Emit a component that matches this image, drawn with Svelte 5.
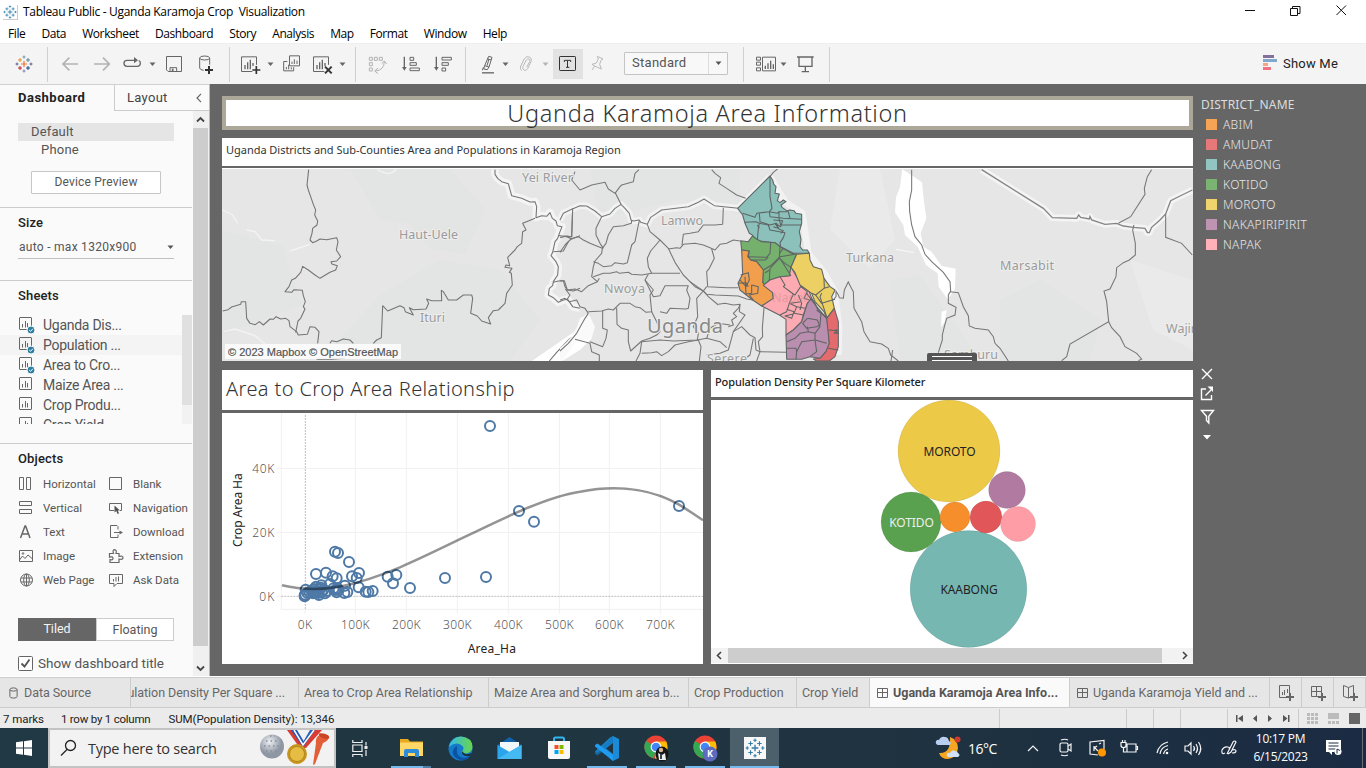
<script>
  const menus = [
    ['File', 8], ['Data', 16], ['Worksheet', 16], ['Dashboard', 16], ['Story', 16],
    ['Analysis', 16], ['Map', 16], ['Format', 16], ['Window', 16], ['Help', 16]
  ];
  const tools = [
    ['logo', 20, 14], ['sep', 1, 13], ['back', 20, 12], ['forward', 20, 12], ['redo', 22, 10],
    ['caret', 7, 5], ['save', 20, 8], ['database', 20, 12], ['sep', 1, 13], ['newsheet', 22, 10],
    ['caret', 7, 5], ['duplicate', 20, 8], ['clear', 22, 10], ['caret', 7, 5], ['sep', 1, 9],
    ['swap', 22, 11], ['ascending', 22, 11], ['descending', 22, 10], ['sep', 1, 11],
    ['highlight', 16, 14], ['caret', 7, 6], ['clip', 16, 9], ['caretoff', 7, 8],
    ['text', 30, 4], ['pin', 16, 7], ['combo', 104, 18], ['sep', 1, 15], ['cards', 22, 11],
    ['caret', 7, 3], ['present', 20, 9], ['sep', 1, 13]
  ];
  const sheets = [
    ['Uganda Dis...', true], ['Population ...', true], ['Area to Cro...', true],
    ['Maize Area ...', false], ['Crop Produ...', false], ['Crop Yield', false]
  ];
  const objects = [
    ['Horizontal', 'Blank'], ['Vertical', 'Navigation'], ['Text', 'Download'],
    ['Image', 'Extension'], ['Web Page', 'Ask Data']
  ];
  const legend = [
    ['ABIM', '#f5a455'], ['AMUDAT', '#e7787a'], ['KAABONG', '#91c5c1'], ['KOTIDO', '#7ab372'],
    ['MOROTO', '#f0d36c'], ['NAKAPIRIPIRIT', '#bf94b3'], ['NAPAK', '#ffb0b8']
  ];

  // Boundary lines of the base map, three units to a pixel, grouped by sheet origin.
  const west = [
    '266,14 261,60 265,75 272,95 280,118 287,135 284,150 293,168 291,180 278,190 276,205 270,225 278,233 290,228 300,222 320,224 350,218 354,230 349,255 362,275 350,288 333,290 336,297 352,302 347,315 330,322 300,340 285,330 265,315 248,304 242,322 226,340 215,345 207,365 195,380 215,382 222,374 247,376 250,392 256,410 250,425 255,432 242,460 234,468 227,503',
    '8,438 24,434 35,426 62,418 64,410 77,410 80,460 90,475 106,479 118,470 130,480 150,462 160,463 168,455 182,462 197,460 207,467 210,485 230,500 235,510 262,508 270,485 285,487 297,500 293,535',
    '330,535 335,527 350,530 370,522 390,525 400,535',
    '460,535 470,525 484,518 488,422 503,438 540,422 552,428 556,440 580,450 568,428 580,434 618,432 626,415 620,402 635,407 665,407 664,376 670,380 685,405 710,405 730,390 755,390 758,400 752,445 772,453 785,468 812,477 805,458 820,437 835,435 855,415 860,385 877,360 874,325 868,322 876,310 855,307 858,300 869,302 863,277 885,255 892,245 905,235 908,200 918,195 908,175 925,168 945,160',
    '1058,135 1055,215 1018,212 1040,215 1055,222 1080,212',
    '1045,230 1030,258 1000,260',
    '1000,352 1015,348 1030,347 1035,365 1042,375 1060,378 1080,370',
    '1036,372 1050,390 1040,405',
    '988,588 1010,562 1050,520 1080,500',
    '290,583 335,583 375,580'
  ];
  const westHalo = [
    '825,14 825,28 833,40 845,50 865,56 875,92 905,100 930,111 945,110 950,125 948,158 965,152 980,154 990,143 997,160 1008,168 1012,182 1026,185 1018,205 1013,220 1005,230 998,262 993,272 1008,290 1015,305 1013,330 1000,350 998,362 988,370 985,390 1000,398 1015,412 1030,405 1043,403 1058,425 1080,430'
  ];
  const center = [
    '45,20 35,45 60,75 95,60 135,52 145,72 165,85 180,65 185,60 220,50 225,25 237,14',
    '165,82 183,118', '455,14 465,25 482,38 477,55 500,70 530,90 557,100', '630,35 640,22 655,10',
    '38,130 35,215 20,213 0,218', '125,155 108,190 108,210 120,235 130,250',
    '0,262 15,240 30,225 38,220 55,215 70,225 90,235 110,243 127,250 125,265 105,288 100,305 95,335 112,350 118,340',
    '100,290 115,295 130,305 155,302 165,293 190,297 202,293 215,240 225,230 235,180 238,168',
    '215,165 214,175 190,182 160,185 145,210 138,235 127,250',
    '262,178 270,200 300,225 325,250 345,292 370,330 390,350 405,365 430,378 445,395 475,420',
    '300,225 285,243 272,258 262,280 265,305 275,325 360,325',
    '100,335 130,325 150,325 170,320 178,325 205,322 215,328 245,330 275,325',
    '265,328 255,345 280,395 300,392 315,362 385,362',
    '325,252 350,248 360,250 370,238 405,235 430,240 450,248 465,255 480,238 500,235 520,225 540,228',
    '490,128 488,178 465,180 430,180 415,200 390,205 370,208 366,240',
    '455,252 463,280 448,310 440,320 443,365 500,368 535,368',
    '0,347 13,347 22,375 45,372 65,380 85,362 112,350',
    '0,405 15,400 28,410 50,405 60,425 75,430 85,445',
    '85,445 75,460 50,505 25,535 0,558', '45,523 90,535 95,560 118,570 118,588',
    '85,440 125,438 145,432 160,435 180,415 210,415 225,425 240,428 258,442 275,440 270,390 280,375 255,345',
    '128,438 128,490 142,495 138,520 128,545 90,530',
    '170,428 171,478 185,490 205,495 205,530 212,558 245,528 270,520 290,510 300,500 290,470 275,440',
    '385,362 380,375 390,400 385,430 378,432 330,430 320,445 300,440',
    '390,350 430,378 410,400 413,455 400,485 415,505 412,525 340,528 300,525 245,530 240,565 228,588',
    '245,565 275,563 290,560 305,572 325,560 345,540 385,530 415,525 423,545 418,588',
    '440,365 430,378 440,388 465,390 535,393 560,402 578,405',
    '475,418 495,415 520,420 540,418 535,430 520,445 530,455 515,465 520,480 505,485',
    '540,418 538,440 555,450 520,500 512,530 505,555 480,565 440,570',
    '520,500 545,485 570,510 585,518 588,555 600,560 678,562',
    '612,428 607,490 608,515 595,530 600,560 590,588',
    '412,525 440,520 480,530 500,548', '440,520 450,490 475,475 510,480',
    '580,520 570,570 545,588',
    '820,405 828,395 828,378 835,390 838,398 850,400 853,375 865,350 868,358 880,380 882,430 905,470 912,500 930,530 965,537 985,550 992,570 1015,588'
  ];
  const centerHalo = ['0,165 10,145 30,135 60,122 80,123 105,138 125,155 150,147 165,130 183,118 195,130 208,145 213,165 220,168 238,165 242,172 262,178 272,157 305,135 385,125 415,112 432,102 463,122 535,130 630,35'];
  const east = [
    '155,14 155,75 148,110 149,140 155,180 165,215 185,240 195,268 215,290 250,322 270,350 272,378 265,390 265,415 288,427 285,450 260,460 253,485 247,510 247,525 235,563',
    '270,380 295,383 310,425 325,452 328,483 345,490 385,495 400,515 405,535 420,550 445,588',
    '775,175 812,155 855,88 853,70 862,35 875,14',
    '822,180 818,195 826,235 826,270 808,285 790,293 770,308 768,335 750,372 732,378 740,410 746,470 630,537 620,575 605,587',
    '746,470 755,488 780,515 795,545 830,565 845,582 835,587',
    '917,147 917,217 965,235 997,270', '98,555 93,588'
  ];
  const eastHalo = ['365,14 550,130 577,158 650,160 656,150 662,157 688,162 690,155 695,165 735,178 770,175 790,183 820,187 855,190 862,203 868,203 875,187 900,165 917,147 932,107 960,93 997,75'];
  const districts = [
    ['#8bc0bb', '150,18 158,30 161,42 168,50 165,70 178,72 172,92 180,98 190,90 198,95 183,105 186,112 200,122 210,120 222,122 228,130 245,133 245,160 238,185 243,208 240,230 248,240 262,240 268,250 220,250 185,232 165,218 110,212 97,195 88,190 75,160 68,135 53,115'],
    ['#75b06c', '62,212 85,215 97,198 110,207 125,215 165,218 182,232 215,250 230,253 213,292 208,318 180,320 150,330 130,346 128,330 130,300 110,275 92,270 85,260 88,243 65,240'],
    ['#f19e4d', '65,240 87,243 83,260 92,270 110,275 130,300 128,338 158,368 160,385 125,408 98,390 60,360 54,340 68,312'],
    ['#feaab2', '130,346 150,330 180,320 208,318 213,290 235,330 245,350 265,358 275,385 262,400 250,435 245,455 220,480 198,495 198,448 178,435 125,408 160,385 158,368'],
    ['#ecd063', '230,253 268,250 270,270 280,290 305,298 312,325 330,350 345,360 335,380 343,415 320,445 312,425 285,395 275,370 240,345 225,308 213,292'],
    ['#b98eae', '275,385 285,400 293,418 320,445 325,470 328,520 318,545 300,565 270,560 245,568 200,568 198,495 220,480 245,455 262,400'],
    ['#e46b6d', '343,415 355,455 355,530 345,560 328,573 290,573 280,567 300,565 318,545 328,520 320,445']
  ];
  const wards = [
    '150,18 150,80 156,115 148,125 110,130 105,142 68,130', '75,157 108,155 118,160 115,175 112,210',
    '118,160 145,165 150,180 195,188 190,203 180,218 182,232', '148,125 150,140 190,145 245,148',
    '148,125 172,130 177,125 177,145 182,165 245,165', '160,150 188,152 182,170 165,160 178,178 190,182 182,190',
    '118,130 120,155 150,165 170,160 175,175 160,170', '112,165 118,175', '177,125 205,125 210,145',
    '85,260 140,262 150,250 152,218', '92,270 135,270 145,262', '180,232 178,265 150,295 148,330', '130,300 155,285 180,260 225,253',
    '180,265 213,318', '178,265 195,280 213,292', '135,308 150,300', '178,250 190,235',
    '62,315 85,308 88,330 78,350 60,330', '75,320 78,372 95,370 95,345 115,350 113,370 88,375 100,390', '54,340 78,338 85,350',
    '180,320 195,345 190,350 220,372 225,375 242,350 262,365 252,385 268,390', '220,372 208,400 230,410 255,415',
    '208,400 200,425 190,430 180,435', '230,410 222,430 235,432 250,435', '200,418 222,425 215,445 195,438 220,432',
    '235,375 245,400 240,420', '212,400 242,395',
    '275,370 287,375 312,355 328,350', '287,375 305,400 345,388', '260,370 290,410 320,445', '305,370 300,380 320,440', '312,325 313,355',
    '200,515 225,505 240,490 265,485 285,490 300,470 292,450 262,445', '262,445 248,460 260,475 290,470 300,465 303,430',
    '200,535 228,535 230,545 245,515 285,510 285,490', '285,510 290,545 270,560', '285,510 320,520', '230,545 228,568', '265,485 262,470', '303,430 290,420',
    '325,480 355,482', '343,480 355,490 343,490 350,478', '325,535 355,540'
  ];

  // Marks of the area/crop scatter plot.
  const marks = [
    [810, 183], [897, 438], [942, 470], [1377, 423], [798, 636], [675, 639], [570, 669], [529, 630], [503, 635],
    [519, 655], [458, 678], [445, 681], [437, 680], [416, 667], [417, 624], [410, 639], [396, 634], [387, 591],
    [345, 560], [354, 564], [288, 627], [318, 623], [338, 634], [350, 640], [375, 662], [382, 681], [373, 684],
    [350, 682], [346, 675], [352, 670], [341, 670], [330, 657], [315, 685], [297, 690], [304, 661], [288, 665],
    [290, 677], [298, 672], [310, 675], [279, 685], [275, 677], [284, 683], [268, 681], [257, 674], [256, 689],
    [254, 694], [262, 684], [305, 680], [320, 678], [295, 684], [303, 668], [356, 675], [254, 691], [282, 672]
  ];
  const xTicks = [[255, '0K'], [406, '100K'], [559, '200K'], [712, '300K'], [865, '400K'], [1018, '500K'], [1168, '600K'], [1321, '700K']];
  const bubbles = [
    [949, 451, 51, '#edc948', 'MOROTO', '#222'], [968.5, 589, 58.4, '#76b7b2', 'KAABONG', '#222'],
    [911, 522, 30, '#59a14f', 'KOTIDO', '#eee'], [1007, 490, 18.4, '#b07aa1', '', ''],
    [955, 517, 15, '#f68e2b', '', ''], [986, 517, 16, '#e15759', '', ''], [1018, 524, 17.5, '#ff9da7', '', '']
  ];
  const tabs = [
    ['Area to Crop Area Relationship', 190, ''], ['Maize Area and Sorghum area b...', 200, ''], ['Crop Production', 108, ''],
    ['Crop Yield', 73, ''], ['Uganda Karamoja Area Info...', 200, 'active'], ['Uganda Karamoja Yield and ...', 200, 'dash']
  ];
</script>

{#snippet caret(color)}
  <svg width="7" height="5" viewBox="0 0 7 5"><path d="M.5 .5h6L3.500 4z" fill={color} /></svg>
{/snippet}

{#snippet lines(list)}
  {#each list as p}<polyline points={p} />{/each}
{/snippet}

{#snippet tableau(size, mono)}
  <svg width={size} height={size} viewBox="0 0 18 18" fill="none" stroke-width="1">
    <path d="M9 6v6M6 9h6" stroke={mono ?? '#e8762c'} stroke-width="1.2" />
    <path d="M5 3v4M3 5h4" stroke={mono ?? '#eb912c'} /><path d="M13 3v4M11 5h4" stroke={mono ?? '#59879b'} />
    <path d="M5 11v4M3 13h4" stroke={mono ?? '#c72035'} /><path d="M13 11v4M11 13h4" stroke={mono ?? '#1f457e'} />
    <path d="M9 .5v3M7.500 2h3" stroke={mono ?? '#7199a6'} /><path d="M9 14.500v3M7.500 16h3" stroke={mono ?? '#7b86b2'} />
    <path d="M2 7.500v3M.5 9h3M16 7.500v3M14.500 9h3" stroke={mono ?? '#5b6591'} />
  </svg>
{/snippet}

{#snippet tool(name)}
  {#if name === 'logo'}{@render tableau(18)}
  {:else if name === 'caret'}{@render caret('#666')}
  {:else if name === 'caretoff'}{@render caret('#b5b5b5')}
  {:else if name === 'back'}
    <svg viewBox="180 162 60 60" width="20" height="20"><path d="M234 192H190M208 173l-19 19 19 19" stroke="#b3b3b3" stroke-width="5" fill="none" /></svg>
  {:else if name === 'forward'}
    <svg viewBox="276 162 60 60" width="20" height="20"><path d="M282 192h44M309 173l19 19-19 19" stroke="#b3b3b3" stroke-width="5" fill="none" /></svg>
  {:else if name === 'redo'}
    <svg viewBox="366 159 66 66" width="22" height="22"><path d="M409 181h-28q-9 0-9 9t9 9h30q10 0 10-9 0-7-5-8" stroke="#666" stroke-width="4" fill="none" /><path d="M402 171l12 10-12 9z" fill="#666" /></svg>
  {:else if name === 'save'}
    <svg viewBox="492 162 60 60" width="20" height="20" fill="none" stroke="#666" stroke-width="3"><path d="M499.500 169.500h45v45h-40l-5-5zM510 214v-11h20v11" /><path d="M518 206v8" stroke-width="5" /></svg>
  {:else if name === 'database'}
    <svg viewBox="588 162 60 60" width="20" height="20" fill="none" stroke="#666" stroke-width="3"><ellipse cx="614" cy="174" rx="15" ry="6" /><path d="M599 174v30q1 6 12 7M629 174v20" /><path d="M627 198v24M615 210h24" stroke="#333" stroke-width="6" /></svg>
  {:else if name === 'newsheet' || name === 'clear'}
    <svg viewBox="720 159 66 66" width="22" height="22" fill="none" stroke="#666" stroke-width="3"><path d="M757 214.500h-32.500v-44h45v24" /><path d="M735 195v13M743 187v21M751 179v29M759 189v9" stroke-width="4" />{#if name === 'newsheet'}<path d="M769 198v24M757 210h24" stroke="#333" stroke-width="5" />{:else}<path d="M759 200l20 20M779 200l-20 20" stroke="#333" stroke-width="6" />{/if}</svg>
  {:else if name === 'duplicate'}
    <svg viewBox="846 162 60 60" width="20" height="20" fill="none" stroke="#666" stroke-width="3"><path d="M868.500 167.500h30v30h-30zM862 184.500h-11v28h30v-11M876 185v7M883 178v14M891 182v10M859 201v7M866 194v14M874 202v6" /></svg>
  {:else if name === 'swap'}
    <svg viewBox="1101 159 66 66" width="22" height="22" fill="none" stroke="#b3b3b3" stroke-width="3"><path d="M1108 172h9v9h-9zM1123 172h9v9h-9zM1138 172h9v9h-9zM1108 188h9v9h-9zM1108 204h9v9h-9zM1126 213q26-2 27-28M1145 191l8-8 7 9M1134 204l-10 9 10 8" /></svg>
  {:else if name === 'ascending' || name === 'descending'}
    <svg viewBox="1197 159 66 66" width="22" height="22" fill="none" stroke="#666" stroke-width="3"><path d="M1210 170v36" stroke-width="4" /><path d="M1203 201h14l-7 11z" fill="#666" stroke="none" />{#if name === 'ascending'}<path d="M1227 172h11v9h-11zM1227 188h19v8h-19zM1227 204h28v8h-28z" />{:else}<path d="M1227 172h28v8h-28zM1227 188h19v8h-19zM1227 204h11v9h-11z" />{/if}</svg>
  {:else if name === 'highlight'}
    <svg viewBox="75 159 48 66" width="16" height="22" fill="none" stroke="#666" stroke-width="3"><path d="M101 169l10 3-9 29-13-4zM89 197l-3 10 11 2 5-8M97 176l11 4M85 202l-3 9M102 177l-6 20" /><path d="M81 218.500h36" stroke-width="4" /></svg>
  {:else if name === 'clip'}
    <svg viewBox="186 159 48 66" width="16" height="22" fill="none" stroke="#b9b9b9" stroke-width="3"><path d="M193 201l12-25q6-9 16-5 8 5 4 14l-10 21q-4 7-10 5-7-4-4-12l10-19q4-5 8-3 5 3 2 8l-9 17M193 201q-1 8 5 11" /></svg>
  {:else if name === 'text'}
    <svg viewBox="294 147 90 90" width="30" height="30" fill="none" stroke="#333" stroke-width="3"><rect x="294" y="147" width="90" height="90" fill="#e2e2e2" stroke="none" /><rect x="313.500" y="169.500" width="48" height="42" rx="2" /><path d="M328 186v-5h19v5M337.500 181v21M333 202h10" /></svg>
  {:else if name === 'pin'}
    <svg viewBox="405 159 48 66" width="16" height="22" fill="none" stroke="#b9b9b9" stroke-width="3"><path d="M427 169l17 8-6 4-4 12 5 14-11-5-9-4-8-5 13-4 6-12zM419 198l-8 12" /></svg>
  {:else if name === 'cards'}
    <svg viewBox="900 159 66 66" width="22" height="22" fill="none" stroke="#666" stroke-width="3"><path d="M904.500 171.500h12v9h-12zM904.500 186.500h12v9h-12zM904.500 203.500h12v9h-12zM922.500 171.500h39v41h-39z" /><path d="M931 197v10M939 190v17M947 182v25M955 193v14" stroke-width="4" /></svg>
  {:else if name === 'present'}
    <svg viewBox="1023 162 60 60" width="20" height="20" fill="none" stroke="#666" stroke-width="4"><path d="M1026 171h50M1032 171v28h39v-28M1051 199v16M1040 215h22" /></svg>
  {/if}
{/snippet}

{#snippet objectIcon(name)}
  <svg class="oicon" width="16" height="16" viewBox="0 0 16 16" fill="none" stroke="#666" stroke-width="1">
    {#if name === 'Horizontal'}<path d="M1.500 1.500h4v12h-4zM8.500 1.500h4v12h-4z" />
    {:else if name === 'Vertical'}<path d="M1.500 1.500h12v4h-12zM1.500 9.500h12v4h-12z" />
    {:else if name === 'Text'}<path d="M2.500 14L7 2h.6L12 14M4.200 10h6" stroke-width="1.500" />
    {:else if name === 'Image'}<path d="M1.500 2.500h13v11h-13zM1.500 12l3-4 2.500 2.500L10 7l4 3.500" /><circle cx="5" cy="5.500" r=".8" />
    {:else if name === 'Web Page'}<circle cx="8.500" cy="8" r="6" /><ellipse cx="8.500" cy="8" rx="2.800" ry="6" /><path d="M3 6h11M3 10h11M8.500 2v12" />
    {:else if name === 'Blank'}<path d="M1.500 1.500h12v12h-12z" />
    {:else if name === 'Navigation'}<path d="M6 10.500H1.500v-7h12v7H12" /><path d="M6.500 5.500v7l1.800-1.500 1.200 3 1.500-.7-1.200-2.700h2.200z" fill="#555" stroke="none" />
    {:else if name === 'Download'}<path d="M10 5.500V2.500L9 1.500H2.500v12H10v-3M6 8.500h8" /><path d="M11.500 6.500v4L15 8.500z" fill="#666" stroke="none" />
    {:else if name === 'Extension'}<path d="M1.500 5.500h4q-1.200-3.500 1-3.800 2.500.1 1.500 3.800H11v3q4-1 4 1.200 0 2.300-4 1.300v3.500H2v-3q3 1 3-1.300 0-2-3.500-1z" stroke-width="1.200" />
    {:else}<path d="M1.500 2.500h13v9H9l-3 3v-3H1.500zM5.500 7v2.500M8 5v4.500M10.500 4.500v5" />{/if}
  </svg>
{/snippet}

{#snippet dashIcon()}
  <svg width="12" height="12" viewBox="0 0 12 12" fill="none" stroke="#666"><path d="M1.500 1.500h10v9h-10zM6.500 1.500v9M1 5.500h10" /></svg>
{/snippet}

{#snippet chrome(initial)}
  <svg width="26" height="28" viewBox="0 0 26 28">
    <circle cx="12" cy="13" r="11.500" fill="#ea4335" /><path d="M12 13L2 7a11.500 11.500 0 0 0 8 17.300z" fill="#34a853" /><path d="M12 13h11.500a11.500 11.500 0 0 1-12.500 11.500z" fill="#fbbc05" /><path d="M12 7.500h10.300q2.500 6-.8 11L12 13z" fill="#fbbc05" />
    <circle cx="12" cy="13" r="5.400" fill="#fff" /><circle cx="12" cy="13" r="4.300" fill="#4285f4" />
    {#if initial}<circle cx="17" cy="20" r="7.500" fill="#5c6bc0" /><text x="17" y="23" class="initial">K</text>
    {:else}<ellipse cx="18" cy="20" rx="6.500" ry="7.500" fill="#151515" /><circle cx="17" cy="16" r="2.200" fill="#d7b59a" /><path d="M14 19l4 2 3-2 1 7h-7z" fill="#eee" /><path d="M17 20v5" stroke="#345" stroke-width="2" />{/if}
  </svg>
{/snippet}

<div class="window">
  <header class="titlebar">
    <span class="appicon">{@render tableau(14, '#3181ad')}</span>
    <span class="caption">Tableau Public - Uganda Karamoja Crop&nbsp; Visualization</span>
    <svg class="controls" width="106" height="22" viewBox="0 0 106 22" fill="none" stroke="#111"><path d="M0 9.500h10M45.500 7.500h7v7h-7zM47.500 7.500v-2h7.500v7h-2.500M91.500 4.500l9.500 9.500M101 4.500L91.500 14" /></svg>
  </header>
  <nav class="menubar">{#each menus as [m, gap]}<span style:margin-left="{gap}px">{m}</span>{/each}</nav>

  <div class="toolbar">
    {#each tools as [name, w, gap]}
      {#if name === 'sep'}<i class="sep" style:margin-left="{gap}px"></i>
      {:else if name === 'combo'}<div class="combo" style:margin-left="{gap}px"><span>Standard</span><b>{@render caret('#555')}</b></div>
      {:else}<span class="tool" style:width="{w}px" style:margin-left="{gap}px">{@render tool(name)}</span>{/if}
    {/each}
    <div class="showme">
      <svg width="14" height="16" viewBox="0 0 14 16"><path d="M0 0h11v3H0z" fill="#84709b" /><path d="M0 4h14v3H0z" fill="#83a8cd" /><path d="M0 8h5v3H0z" fill="#f4a582" /><path d="M0 12h8v3H0z" fill="#f27284" /></svg>
      <span>Show Me</span>
    </div>
  </div>

  <main>
    <aside>
      <div class="sidetabs"><b>Dashboard</b><div><span>Layout</span><svg width="8" height="10" viewBox="0 0 8 10" fill="none" stroke="#666" stroke-width="1.200"><path d="M6 .8L2 5l4 4.200" /></svg></div></div>
      <div class="sidebody">
        <div class="panel">
          <section class="device"><div class="default">Default</div><div class="phone">Phone</div><button>Device Preview</button></section>
          <section class="size"><h3>Size</h3><div class="select"><span>auto - max 1320x900</span>{@render caret('#555')}</div></section>
          <section class="sheets"><h3>Sheets</h3>
            <div class="listwrap">
              <ul>{#each sheets as [s, used], i}<li class:hover={i === 1}>
                <svg width="17" height="18" viewBox="0 0 17 18" fill="none" stroke="#666"><rect x="1.500" y="1.500" width="12" height="12" rx=".5" /><path d="M4.500 8v3.500M7.500 5v6.500M9.500 7v4.500" />{#if used}<circle cx="13" cy="14" r="4" fill="#2e7ea3" stroke="#fafafa" /><path d="M11.200 14l1.400 1.300 2.300-2.600" stroke="#fff" />{/if}</svg>
                <span>{s}</span></li>{/each}</ul>
              <i class="track"><i></i></i>
            </div>
          </section>
          <section class="objects"><h3>Objects</h3>
            <div class="grid">{#each objects as [a, b]}<span>{@render objectIcon(a)}{a}</span><span>{@render objectIcon(b)}{b}</span>{/each}</div>
            <div class="toggle"><b>Tiled</b><span>Floating</span></div>
            <div class="check"><svg width="15" height="15" viewBox="0 0 15 15" fill="none" stroke="#666"><rect x=".5" y=".5" width="14" height="14" rx="1" fill="#fff" /><path d="M3.500 7.500l3 3 5-7" stroke="#555" stroke-width="1.800" /></svg><span>Show dashboard title</span></div>
          </section>
        </div>
        <div class="vscroll"><svg width="15" height="17" viewBox="0 0 15 17" fill="none" stroke="#444" stroke-width="1.800"><path d="M4 10.500L7.500 7l3.500 3.500" /></svg><i></i><svg width="15" height="29" viewBox="0 0 15 29" fill="none" stroke="#444" stroke-width="1.800"><path d="M4 20.500L7.500 24l3.500-3.500" /></svg></div>
      </div>
    </aside>

    <div class="canvas">
      <div class="board">
        <h1>Uganda Karamoja Area Information</h1>
        <div class="maptitle">Uganda Districts and Sub-Counties Area and Populations in Karamoja Region</div>
        <div class="map">
          <svg width="971" height="192" viewBox="222 169 971 192">
            <rect x="222" y="169" width="971" height="192" fill="#e6e6e6" />
            <g fill="#e1e3e2"><path d="M350 169h100l35 40-20 45-35-5-20-25-30-5zM380 295l60-35 60 10 40 50-30 41H320zM222 230l60 15 20 60-80 30z" opacity=".6" /><path d="M590 169h150v45l-60-15-80 20zM1000 300l40-20 60 40-10 41h-90zM890 280l30-5 60 85h-80z" opacity=".7" /><path d="M840 169h40l15 70-25 30-40-40zM1130 260l63 20v70l-40-20z" fill="#eaeaea" /></g>
            <g transform="translate(220 165) scale(.33333)" fill="none">
              <path d="M930 592L1080 488l20-25 15 12v45l-35 35-60 37z" fill="#fff" />
              <path d="M470 10q10 12 35 16 20-5 25-16M8 135l30 15 15 25M80 195l25 5 20 25 40 2M210 258l60-20M10 500l35-8 60 20 30 25" stroke="#f3f3f3" stroke-width="4" />
              <g stroke="#f4f4f4" stroke-width="23" stroke-linejoin="round">{@render lines(westHalo)}</g>
              <g stroke="#747474" stroke-width="3.200" stroke-linejoin="round">{@render lines(westHalo)}{@render lines(west)}</g>
            </g>
            <g transform="translate(560 165) scale(.33333)" fill="none">
              <path d="M0 550q45-35 60-90l25-15 20 40-10 35-45 8-45 60H0z" fill="#fafafa" />
              <g stroke="#f2f2f2" stroke-width="20" stroke-linejoin="round">{@render lines(centerHalo)}<polyline points="630,35 675,110 727,145 745,265 790,320 825,380 837,490 835,570" /></g>
              <g stroke="#777" stroke-width="3.200" stroke-linejoin="round">{@render lines(centerHalo)}{@render lines(center)}</g>
            </g>
            <g transform="translate(860 165) scale(.33333)" fill="none">
              <path d="M127 12l-7 55-12 30-3 45 25 38 5 30 38 35 25 55 35 25 3 40 27 38 22-30 2-62-42-8-30-43-25-15-8-40 17-45-7-50-6-58zM245 440l15-5-5 35-12 15z" fill="#fff" />
              <path d="M108 253l55 10" stroke="#f6f6f6" stroke-width="4" />
              <g stroke="#f4f4f4" stroke-width="20" stroke-linejoin="round">{@render lines(eastHalo)}</g>
              <g stroke="#848484" stroke-width="4">{@render lines(eastHalo)}</g>
              <g stroke="#777" stroke-width="3.200">{@render lines(east)}</g>
            </g>
            <g class="place">
              <text x="522" y="182" textLength="51">Yei River</text><text x="399" y="238.500" textLength="59">Haut-Uele</text><text x="420" y="322" textLength="25">Ituri</text>
              <text x="661" y="225" textLength="42">Lamwo</text><text x="604" y="293" textLength="41">Nwoya</text><text x="707" y="363" textLength="40">Serere</text>
              <text x="846" y="262" textLength="48">Turkana</text><text x="1000" y="269.500" textLength="54">Marsabit</text><text x="944" y="359" textLength="54">Samburu</text><text x="1166" y="333">Wajir</text>
              <text class="country" x="647" y="333" textLength="76">Uganda</text>
            </g>
            <g transform="translate(720 170) scale(.33333)" stroke="#5f6464" stroke-width="3.200" stroke-linejoin="round">
              {#each districts as [fill, points]}<polygon {points} {fill} />{/each}
              <g fill="none">{@render lines(wards)}</g>
            </g>
            <text x="772" y="302" class="napak" textLength="38">Napak</text>
            <rect x="225" y="344" width="176" height="15" fill="#fff" opacity=".8" />
            <text x="228" y="356" class="credit" textLength="170">© 2023 Mapbox © OpenStreetMap</text>
            <path d="M927 361v-6q0-2 2-2h46q2 0 2 2v6z" fill="#555" /><path d="M932 356.500h40M932 360.500h40" stroke="#fff" />
          </svg>
        </div>
        <div class="lower">
          <div class="scatter">
            <h2>Area to Crop Area Relationship</h2>
            <svg width="481" height="251" viewBox="6 144 1443 753">
              <g stroke="#f0f0f0" stroke-width="3" fill="none"><path d="M184 144v590M168 310h1281M168 502h1281M184 733h1265" />{#each xTicks.slice(1) as [x]}<path d="M{x} 144v602" />{/each}<path d="M255 733v13M168 694h16" /></g>
              <path d="M256 150v584M184 694h1265" stroke="#bfbfbf" stroke-width="3" stroke-dasharray="6 3" />
              <g fill="none" stroke="#4e79a7" stroke-width="6">{#each marks as [x, y]}<circle cx={x} cy={y} r="15" />{/each}</g>
              <path d="M186 661C310 690 420 657 540 607C720 530 940 400 1080 380C1210 355 1310 380 1377 419Q1415 442 1449 466" fill="none" stroke="#000" stroke-opacity=".42" stroke-width="7.500" />
              <g class="ticks">
                {#each xTicks as [x, t]}<text x={x} y="792" text-anchor="middle" textLength={t.length * 21.5}>{t}</text>{/each}
                <text x="97" y="323" textLength="66">40K</text><text x="97" y="515" textLength="66">20K</text><text x="118" y="707" textLength="45">0K</text>
              </g>
              <g class="axis"><text x="743" y="864" textLength="145">Area_Ha</text><text transform="translate(66 546) rotate(-90)" textLength="221">Crop Area Ha</text></g>
            </svg>
          </div>
          <div class="density">
            <div class="dtitle">Population Density Per Square Kilometer</div>
            <div class="dbody">
              <svg width="482" height="248" viewBox="711 400 482 248">
                {#each bubbles as [x, y, r, c, t, tc]}<circle cx={x} cy={y} {r} fill={c} stroke="#0001" />{#if t}<text x={x + .5} y={y + 5} fill={tc} class="blabel">{t}</text>{/if}{/each}
              </svg>
              <div class="hscroll"><svg width="17" height="15" viewBox="0 0 17 15"><path d="M10 4L6.500 7.500 10 11" /></svg><i></i><svg width="17" height="15" viewBox="0 0 17 15"><path d="M7 4l3.500 3.500L7 11" /></svg></div>
            </div>
          </div>
        </div>
      </div>
      <div class="right">
        <div class="ltitle">DISTRICT_NAME</div>
        {#each legend as [name, color]}<div class="lrow"><svg width="11" height="11"><rect width="11" height="11" fill={color} /></svg><span>{name}</span></div>{/each}
        <svg class="actions" width="16" height="76" viewBox="0 0 16 76" fill="none" stroke="#fff" stroke-width="1.400"><path d="M3 2l10 10M13 2L3 12M7 22H2.500v10.500h10V28M6.500 28.500L12 23" /><path d="M8.500 19.500H14V25z" fill="#fff" stroke="none" /><path d="M2.500 43.500h12l-4.700 5.700V56l-2.300-2.500v-4.300z" /><path d="M4 68h8l-4 4.500z" fill="#fff" stroke="none" /></svg>
      </div>
    </div>
  </main>

  <div class="tabs">
    <div class="tab source"><svg width="9" height="12" viewBox="0 0 9 12" fill="none" stroke="#666"><ellipse cx="4.500" cy="2.500" rx="3.600" ry="1.600" /><path d="M.9 2.500v7q0 1.600 3.600 1.600t3.600-1.600v-7" /></svg><span>Data Source</span></div>
    <div class="tab cut"><span>ulation Density Per Square ...</span></div>
    {#each tabs as [t, w, kind]}<div class="tab {kind}" style:width="{w}px">{#if kind}{@render dashIcon()}{/if}<span>{t}</span></div>{/each}
    {#each [0, 1, 2] as n}<div class="tab add"><svg width="17" height="17" viewBox="0 0 17 17" fill="none" stroke="#666">{#if n === 0}<path d="M10 13.500H2.500V1.500h10v8M5.500 8v3M7.500 6v5M10.500 5v4" />{:else if n === 1}<path d="M10 12.500H2.500V2.500h10v7M7.500 2.500v10M2 7.500h11" />{:else}<path d="M7.500 3.500L2.500 1.500v11l5 1.500 2-1M7.500 3.500l5-2v8M7.500 3.500V14" />{/if}<path d="M13 9v8M9 13h8" stroke-width="2" /></svg></div>{/each}
  </div>

  <div class="status">
    <span>7 marks</span><span class="s2">1 row by 1 column</span><span class="s3">SUM(Population Density): 13,346</span>
    <div class="cells"><i></i><i></i><i></i><i></i>
      <div class="steps"><svg width="56" height="9" viewBox="0 0 56 9" fill="#555"><path d="M0 1h1.500v7H0zM7 1v7L2 4.500zM21 1v7l-4-3.500zM32 1v7l4-3.500zM47 1v7l4.500-3.500zM52 1h1.500v7H52z" /></svg></div>
      <div class="views"><svg width="54" height="11" viewBox="0 0 54 11" fill="#bbb"><path d="M0 0h3v3H0zM4 0h3v3H4zM8 0h3v3H8zM0 4h3v3H0zM4 4h3v3H4zM8 4h3v3H8zM0 8h3v3H0zM4 8h3v3H4zM8 8h3v3H8zM21 0h11v6H21zM21 8h3v3h-3zM25 8h3v3h-3zM29 8h3v3h-3z" /><path d="M42 0h11v11H42z" fill="#666" /></svg></div>
    </div>
  </div>

  <footer>
    <div class="start"><svg width="16" height="16" viewBox="0 0 16 16" fill="#fff"><path d="M0 2.300L7 1.300V7.500H0zM8 1.200L16 0v7.500H8zM0 8.500h7v6.200l-7-1zM8 8.500h8V16l-8-1.200z" /></svg></div>
    <div class="search">
      <svg width="17" height="18" viewBox="0 0 17 18" fill="none" stroke="#222" stroke-width="1.300"><circle cx="10.500" cy="6.500" r="5" /><path d="M7 10.500L1 16.500" /></svg>
      <span>Type here to search</span>
      <svg class="medal" width="74" height="36" viewBox="258 730 74 36">
        <defs><radialGradient id="ball" cx=".4" cy=".3"><stop offset="0" stop-color="#eef0f3" /><stop offset="1" stop-color="#8e96a3" /></radialGradient></defs>
        <circle cx="272" cy="746.500" r="12" fill="url(#ball)" /><path d="M266 741h12M264 746h16M266 751h12M270 736h5" stroke="#858e9c" stroke-dasharray="1.500 3" stroke-width="1.500" />
        <path d="M287 730h7l12 17-4 4z" fill="#d93b35" /><path d="M291 730h6l9 15-3 2z" fill="#2457b5" /><path d="M310 730h9l-15 19h-5z" fill="#2863bd" /><path d="M315 730h7l-16 18-3-1z" fill="#d93b35" /><path d="M294 730l9 15 11-15" stroke="#fff" stroke-width="1.500" fill="none" />
        <circle cx="297" cy="754" r="10" fill="#c89620" /><circle cx="297" cy="754" r="7.500" fill="#e5bd45" stroke="#a97913" stroke-width=".7" />
        <path d="M318 736q6-4 11 0 0 5-6 7l-8 21-2 1 3-22q-1-4 2-7z" fill="#e25e38" /><ellipse cx="324" cy="736" rx="5.500" ry="2.300" fill="#c94524" transform="rotate(20 324 736)" />
      </svg>
    </div>
    <div class="app tv"><svg width="16" height="17" viewBox="0 0 16 17" fill="none" stroke="#eee" stroke-width="1.200"><path d="M.8 0v2.500H10V0M.8 5h9.200v6.500H.8zM.8 17v-2.500H10V17M14 2v3.500M14 10v6" /><path d="M14 6v3" stroke-width="3" /></svg></div>
    <div class="app"><svg width="23" height="20" viewBox="0 0 23 20"><path d="M0 1h8l2 2.500h13V16H0z" fill="#e8a920" /><path d="M0 4.500h23V18H0z" fill="#ffd766" /><path d="M4 19v-6q0-2 2-2h11q2 0 2 2v6h-4v-4H8v4z" fill="#2f8dd8" /></svg><i class="bar multi"></i></div>
    <div class="app"><svg width="25" height="25" viewBox="0 0 25 25"><defs><linearGradient id="eg"><stop stop-color="#36b8e6" /><stop offset="1" stop-color="#68d64c" /></linearGradient></defs><circle cx="12.500" cy="12.500" r="12" fill="#137bc9" /><path d="M1 11Q3 1 13 .5q11 1 11.500 10 0 6-6.500 7-4 0-4.500-2 3-2 1.500-5Q9 4.500 1 11z" fill="url(#eg)" /><path d="M9 13q-1 8 7 9 4 0 7-3-4 7-11 5-8-3-7-9 1-4 4-5z" fill="#0d53a1" /><path d="M14 15q3 5 10 2l-2 3q-9 1-8-5z" fill="#20303a" /></svg></div>
    <div class="app"><svg width="25" height="22" viewBox="0 0 25 22"><path d="M.5 8L12.500 0l12 8v14H.5z" fill="#0f63ad" /><path d="M3 5h19v10H3z" fill="#f2f7fa" /><path d="M.5 8l12 7 12-7v14H.5z" fill="#2aa5eb" /><path d="M.5 22l15-9 9-5v14z" fill="#45b9f2" /></svg></div>
    <div class="app"><svg width="24" height="24" viewBox="0 0 24 24"><path d="M7 6V3q0-1.500 1.500-1.500h7Q17 1.500 17 3v3" fill="none" stroke="#31b7ef" stroke-width="2" /><path d="M1 5h22v16q0 2-2 2H3q-2 0-2-2z" fill="#f7f7f7" /><path d="M7.500 9h4v4h-4z" fill="#f25022" /><path d="M12.500 9h4v4h-4z" fill="#7fba00" /><path d="M7.500 14h4v4h-4z" fill="#00a4ef" /><path d="M12.500 14h4v4h-4z" fill="#ffb900" /></svg></div>
    <div class="app"><svg width="25" height="25" viewBox="0 0 25 25"><path d="M18 0l6 3v19l-6 3L6.500 13.500 2.500 17 0 15.500 14.500 2z" fill="#1b8bd8" /><path d="M18 0v7L2.500 19.500 0 18v-2z" fill="#1177bd" opacity=".7" /><path d="M0 9l2.500-1.500L18 19v6L0 10.500z" fill="#1f9cf0" /><path d="M18 7v11l-7-5.500z" fill="#20333e" /></svg><i class="bar"></i></div>
    <div class="app">{@render chrome(false)}<i class="bar"></i></div>
    <div class="app">{@render chrome(true)}<i class="bar"></i></div>
    <div class="app current"><span>{@render tableau(20, '#347ca5')}</span><i class="bar"></i></div>
    <div class="tray">
      <svg class="weather" width="26" height="24" viewBox="0 0 26 24"><path d="M15 1q8 3 8 11-1 10-10 11-7 0-9-6 12 1 11-16z" fill="#f5a623" /><circle cx="22.500" cy="3.500" r="3" fill="#d13b2e" /><path d="M3 9q-3-1-2-4 2-2 3-1 2-4 6-3 3 0 4 4 3 1 1 4z" fill="#b8cff0" /><path d="M13 21q-2-1-1-3 1-2 3-1 2-4 5-2 2 0 3 2 3 2 0 4z" fill="#cfe0f7" /></svg>
      <span class="temp">16°C</span>
      <svg width="215" height="20" viewBox="1026 738 215 20" fill="none" stroke="#f4f4f4" stroke-width="1.200">
        <path d="M1028 751l5-5 5 5" /><rect x="1060" y="743" width="8" height="9" rx="1.500" /><path d="M1068 746l3-2v7l-3-2M1061 740q4-1.500 7 0M1061 755q4 1.500 7 0" />
        <path d="M1098 755l-8-1v-12l14-1.500V749M1094 751v-5M1094 748l3-2M1095 748l3 3M1099 744l2-1" /><circle cx="1102" cy="752.500" r="4" fill="#ff9800" stroke="none" />
        <path d="M1127 744h9v8h-9zM1136 746.500h1.500v3H1136M1121 742.500h5v3q0 2-2.500 2t-2.500-2zM1122.500 740v2M1125 740v2M1123.500 748v4h3" />
        <path d="M1157 753q2-9 11-11M1160 754q1-7 8-8.500M1163.500 754q1-4 4.500-5" /><circle cx="1167" cy="753" r="1.300" fill="#fff" stroke="none" />
        <path d="M1185 746h3l3-3v11l-3-3h-3zM1193.500 746q2 2.500 0 5M1196 744q3 4.500 0 9M1198.500 742q4.500 6.500 0 13" />
        <path d="M1225 753q-4 2-3-3 2-4 6-3 2 0 1 3l-2 4 6-12q2-2 3 0l-5 10-3 2M1232 750q4-1 4 1t-4 2" />
      </svg>
      <div class="clock"><span>10:17 PM</span><span>6/15/2023</span></div>
      <svg class="note" width="18" height="18" viewBox="0 0 18 18" fill="#fff"><path d="M1 1h15v9h-3l-4 3H7v3l-3-3H1z" /><path d="M3.500 4h10M3.500 7h10M3.500 10h7" stroke="#1d2d42" stroke-width="1.200" /><circle cx="13" cy="12.500" r="3.500" /><path d="M12 14.500V10l3 1.500" stroke="#1d2d42" fill="none" /></svg>
      <i class="peek"></i>
    </div>
  </footer>
</div>

<style>
  :global(body) { overflow: hidden; }
  svg { display: block; flex: none; }
  .window { width: 1366px; height: 768px; display: flex; flex-direction: column; overflow: hidden; background: #fff; font-family: Roboto, sans-serif; color: #555; white-space: nowrap; }
  .window * { box-sizing: border-box; }
  .titlebar { height: 24px; display: flex; align-items: center; padding-left: 3px; font: 12px "Open Sans", sans-serif; color: #000; flex: none; }
  .appicon { border: 1px solid #ccc; border-width: 0 1px 1px 0; margin-right: 5px; }
  .caption { letter-spacing: -.31px; margin-top: -1px; }
  .controls { margin-left: auto; margin-right: 15px; }
  .menubar { height: 19px; display: flex; align-items: center; font: 12px/19px "Open Sans", sans-serif; letter-spacing: -.4px; color: #000; flex: none; }
  .toolbar { height: 41px; flex: none; background: #f4f4f4; border-top: 1px solid #eee; display: flex; align-items: center; }
  .tool { display: flex; align-items: center; justify-content: center; flex: none; }
  .sep { width: 1px; height: 35px; background: #d0d0d0; flex: none; }
  .combo { width: 104px; height: 23px; border: 1px solid #c4c4c4; border-radius: 1px; display: flex; background: #f8f8f8; font-size: 13px; line-height: 20px; letter-spacing: .28px; margin-top: -1px; }
  .combo span { flex: 1; padding-left: 7px; }
  .combo b { width: 19px; border-left: 1px solid #ddd; display: flex; align-items: center; justify-content: center; }
  .showme { margin-left: auto; margin-right: 28px; margin-top: -2px; display: flex; align-items: center; gap: 6px; color: #222; font-size: 13px; letter-spacing: .2px; }

  main { height: 592px; flex: none; display: flex; margin-bottom: 1px; }
  aside { width: 210px; background: #fafafa; border-right: 1px solid #bbb; flex: none; display: flex; flex-direction: column; }
  .sidetabs { height: 27px; display: flex; font-size: 13px; line-height: 25px; color: #222; border-top: 1px solid #d0d0d0; }
  .sidetabs > b { width: 114px; padding-left: 18px; letter-spacing: .5px; font-weight: 700; }
  .sidetabs > div { flex: 1; border: solid #ccc; border-width: 0 0 1px 1px; display: flex; align-items: center; padding-left: 12px; color: #444; gap: 27px; letter-spacing: .3px; }
  .sidebody { flex: 1; display: flex; justify-content: space-between; }
  .panel { width: 192px; }
  .vscroll { width: 16px; background: #f0f0f0; display: flex; flex-direction: column; }
  .vscroll i { height: 518px; width: 15px; background: #cdcdcd; }
  section { border-bottom: 1px solid #ccc; }
  h3 { margin: 0; font-size: 13px; line-height: 18px; font-weight: 500; color: #222; padding-left: 18px; letter-spacing: .15px; }
  .device { height: 97px; padding-top: 12px; font-size: 13px; line-height: 18px; }
  .default { margin-left: 18px; width: 156px; height: 18px; background: #e5e5e5; padding-left: 13px; letter-spacing: .15px; }
  .phone { padding-left: 41px; letter-spacing: .2px; }
  .device button { display: block; margin: 12px 0 0 31px; width: 130px; height: 23px; border: 1px solid #c6c6c6; border-radius: 1px; background: #fff; font: 12px Roboto, sans-serif; letter-spacing: .2px; color: #555; padding: 0 0 2px; }
  .size { height: 73px; padding-top: 6px; }
  .select { margin: 4px 0 0 18px; width: 156px; height: 23px; border-bottom: 1px solid #c0c0c0; display: flex; align-items: center; justify-content: space-between; padding-left: 1px; font-size: 12px; letter-spacing: .28px; }
  .sheets { height: 163px; padding-top: 6px; }
  .listwrap { margin-top: 10px; height: 109px; display: flex; overflow: hidden; }
  ul { margin: 0; padding: 0; list-style: none; width: 182px; }
  li { height: 20px; padding-left: 18px; display: flex; align-items: center; gap: 8px; font-size: 14px; letter-spacing: -.27px; }
  li.hover { background: #f4f4f4; }
  .track { width: 10px; background: #f2f2f2; }
  .track i { display: block; height: 90px; background: #e0e0e0; }
  .objects { border: 0; padding-top: 6px; }
  .grid { margin-top: 4px; display: grid; grid-template-columns: 90px 100px; grid-auto-rows: 24px; padding-left: 18px; font-size: 11.500px; }
  .grid span { display: flex; align-items: center; gap: 9px; }
  .toggle { display: flex; margin: 26px 0 0 18px; width: 156px; height: 23px; font-size: 12.500px; line-height: 22px; text-align: center; }
  .toggle b { width: 78px; background: #666; color: #f4f4f4; font-weight: 400; }
  .toggle span { width: 78px; border: 1px solid #ccc; background: #fff; }
  .check { margin: 15px 0 0 18px; display: flex; gap: 5px; font-size: 13.500px; line-height: 15px; letter-spacing: -.03px; }

  .canvas { flex: 1; background: #666; display: flex; padding: 12px 0 0 12px; }
  .board { width: 971px; flex: none; }
  h1 { margin: 0; height: 34px; border: 4px solid #aca899; background: #fff; text-align: center; font: 300 23.500px/26px "Noto Sans", sans-serif; color: #333; letter-spacing: .68px; }
  .maptitle { margin-top: 8px; height: 28px; background: #fff; font: 11px/24px "Noto Sans", sans-serif; letter-spacing: -.03px; padding-left: 4px; color: #333; }
  .map { margin-top: 2px; height: 193px; border-top: 1px solid #fff; overflow: hidden; }
  .place text { font: 12.500px "Noto Sans", sans-serif; fill: #9b9b9b; paint-order: stroke; stroke: #eee; stroke-width: 2px; }
  .place .country { font-size: 20px; fill: #888; }
  .napak { font: 12.500px "Noto Sans", sans-serif; fill: #cf8b92; opacity: .5; }
  .credit { font: 500 11px "Liberation Sans", sans-serif; fill: #555; stroke: #555; stroke-width: .2px; }
  .lower { margin-top: 9px; display: flex; gap: 8px; height: 294px; }
  .scatter { width: 481px; }
  .scatter h2 { margin: 0 0 3px; height: 40px; background: #fff; font: 300 20px/38px "Noto Sans", sans-serif; padding-left: 4px; color: #333; letter-spacing: .38px; }
  .scatter svg { background: #fff; }
  .ticks text { font: 300 36px "Noto Sans", sans-serif; fill: #555; }
  .axis text { font: 36px "Noto Sans", sans-serif; fill: #222; }
  .density { width: 482px; }
  .dtitle { height: 27px; background: #fff; margin-bottom: 3px; padding-left: 4px; font: 500 11px/24px "Noto Sans", sans-serif; color: #222; letter-spacing: -.1px; }
  .dbody { background: #fff; height: 264px; }
  .blabel { font: 12px "Noto Sans", sans-serif; text-anchor: middle; letter-spacing: -.1px; }
  .hscroll { display: flex; height: 15px; background: #f2f2f2; }
  .hscroll i { width: 434px; background: #cdcdcd; margin-right: 14px; }
  .hscroll svg { fill: none; stroke: #444; stroke-width: 1.600px; }
  .right { padding-left: 8px; color: #e6e6e6; font: 300 12px "Noto Sans", sans-serif; letter-spacing: .3px; }
  .ltitle { height: 18px; line-height: 17px; font-weight: 400; color: #ddd; letter-spacing: .15px; }
  .lrow { height: 20px; display: flex; align-items: center; padding-left: 5px; gap: 6px; }
  .actions { margin: 113px 0 0 -2px; }

  .tabs { height: 31px; flex: none; display: flex; border-top: 1px solid #ccc; border-bottom: 1px solid #ccc; background: #e6e6e6; font-size: 12.500px; letter-spacing: -.05px; color: #666; }
  .tab { display: flex; align-items: center; height: 29px; border-right: 1px solid #ccc; padding-left: 5px; flex: none; overflow: hidden; }
  .source { width: 131px; padding-left: 9px; gap: 6px; }
  .cut { width: 168px; justify-content: flex-end; padding: 0 13px 0 0; }
  .active, .dash { gap: 5px; padding-left: 6px; }
  .active { background: #fafafa; font-weight: 700; color: #555; letter-spacing: 0; }
  .add { width: 32px; padding-left: 7px; }

  .status { height: 20px; flex: none; background: #ebebeb; display: flex; align-items: center; font-size: 11.500px; letter-spacing: -.06px; color: #222; padding: 1px 0 0 3px; }
  .s2 { margin-left: 17px; letter-spacing: -.22px; }
  .s3 { margin-left: 18px; letter-spacing: -.08px; }
  .cells { margin-left: auto; height: 20px; display: flex; }
  .cells > * { border-left: 1px solid #ccc; }
  .cells i { width: 27px; }
  .cells i:first-child { width: 127px; }
  .cells i:nth-child(4) { width: 47px; }
  .steps { width: 71px; padding: 5px 0 0 8px; }
  .views { width: 68px; padding: 4px 0 0 8px; }

  footer { height: 40px; flex: none; background: linear-gradient(90deg, #203944, #1f3440 60%, #1b2b43); display: flex; color: #fff; }
  .start { width: 48px; display: flex; align-items: center; padding-left: 16px; }
  .search { width: 288px; border: 2px solid #c3c3c3; background: #f2f2f2; display: flex; align-items: center; padding-left: 10px; color: #333; font: 14.500px "Open Sans", sans-serif; letter-spacing: -.25px; }
  .search span { margin-left: 11px; }
  .medal { margin-left: auto; margin-right: 2px; }
  .app { width: 49px; display: flex; align-items: center; justify-content: center; position: relative; }
  .tv { width: 51px; padding-right: 3px; }
  .bar { position: absolute; bottom: 0; left: 4px; width: 40px; height: 2px; background: #76b9ed; }
  .multi { border-right: 8px solid #507fa3; }
  .current { background: #4b606b; }
  .current .bar { left: 0; width: 49px; }
  .current span { background: #f7f7f7; padding: 1px; }
  .initial { font: 700 9px Roboto, sans-serif; fill: #fff; text-anchor: middle; }
  .tray { margin-left: auto; display: flex; align-items: center; font: 12px "Open Sans", sans-serif; letter-spacing: -.3px; }
  .temp { width: 58px; margin-left: 7px; font-size: 14px; letter-spacing: -.5px; }
  .clock { width: 79px; display: flex; flex-direction: column; align-items: center; line-height: 18px; }
  .note { margin-left: 5px; }
  .peek { width: 1px; height: 40px; background: #66717c; margin: 0 3px 0 19px; }
</style>
